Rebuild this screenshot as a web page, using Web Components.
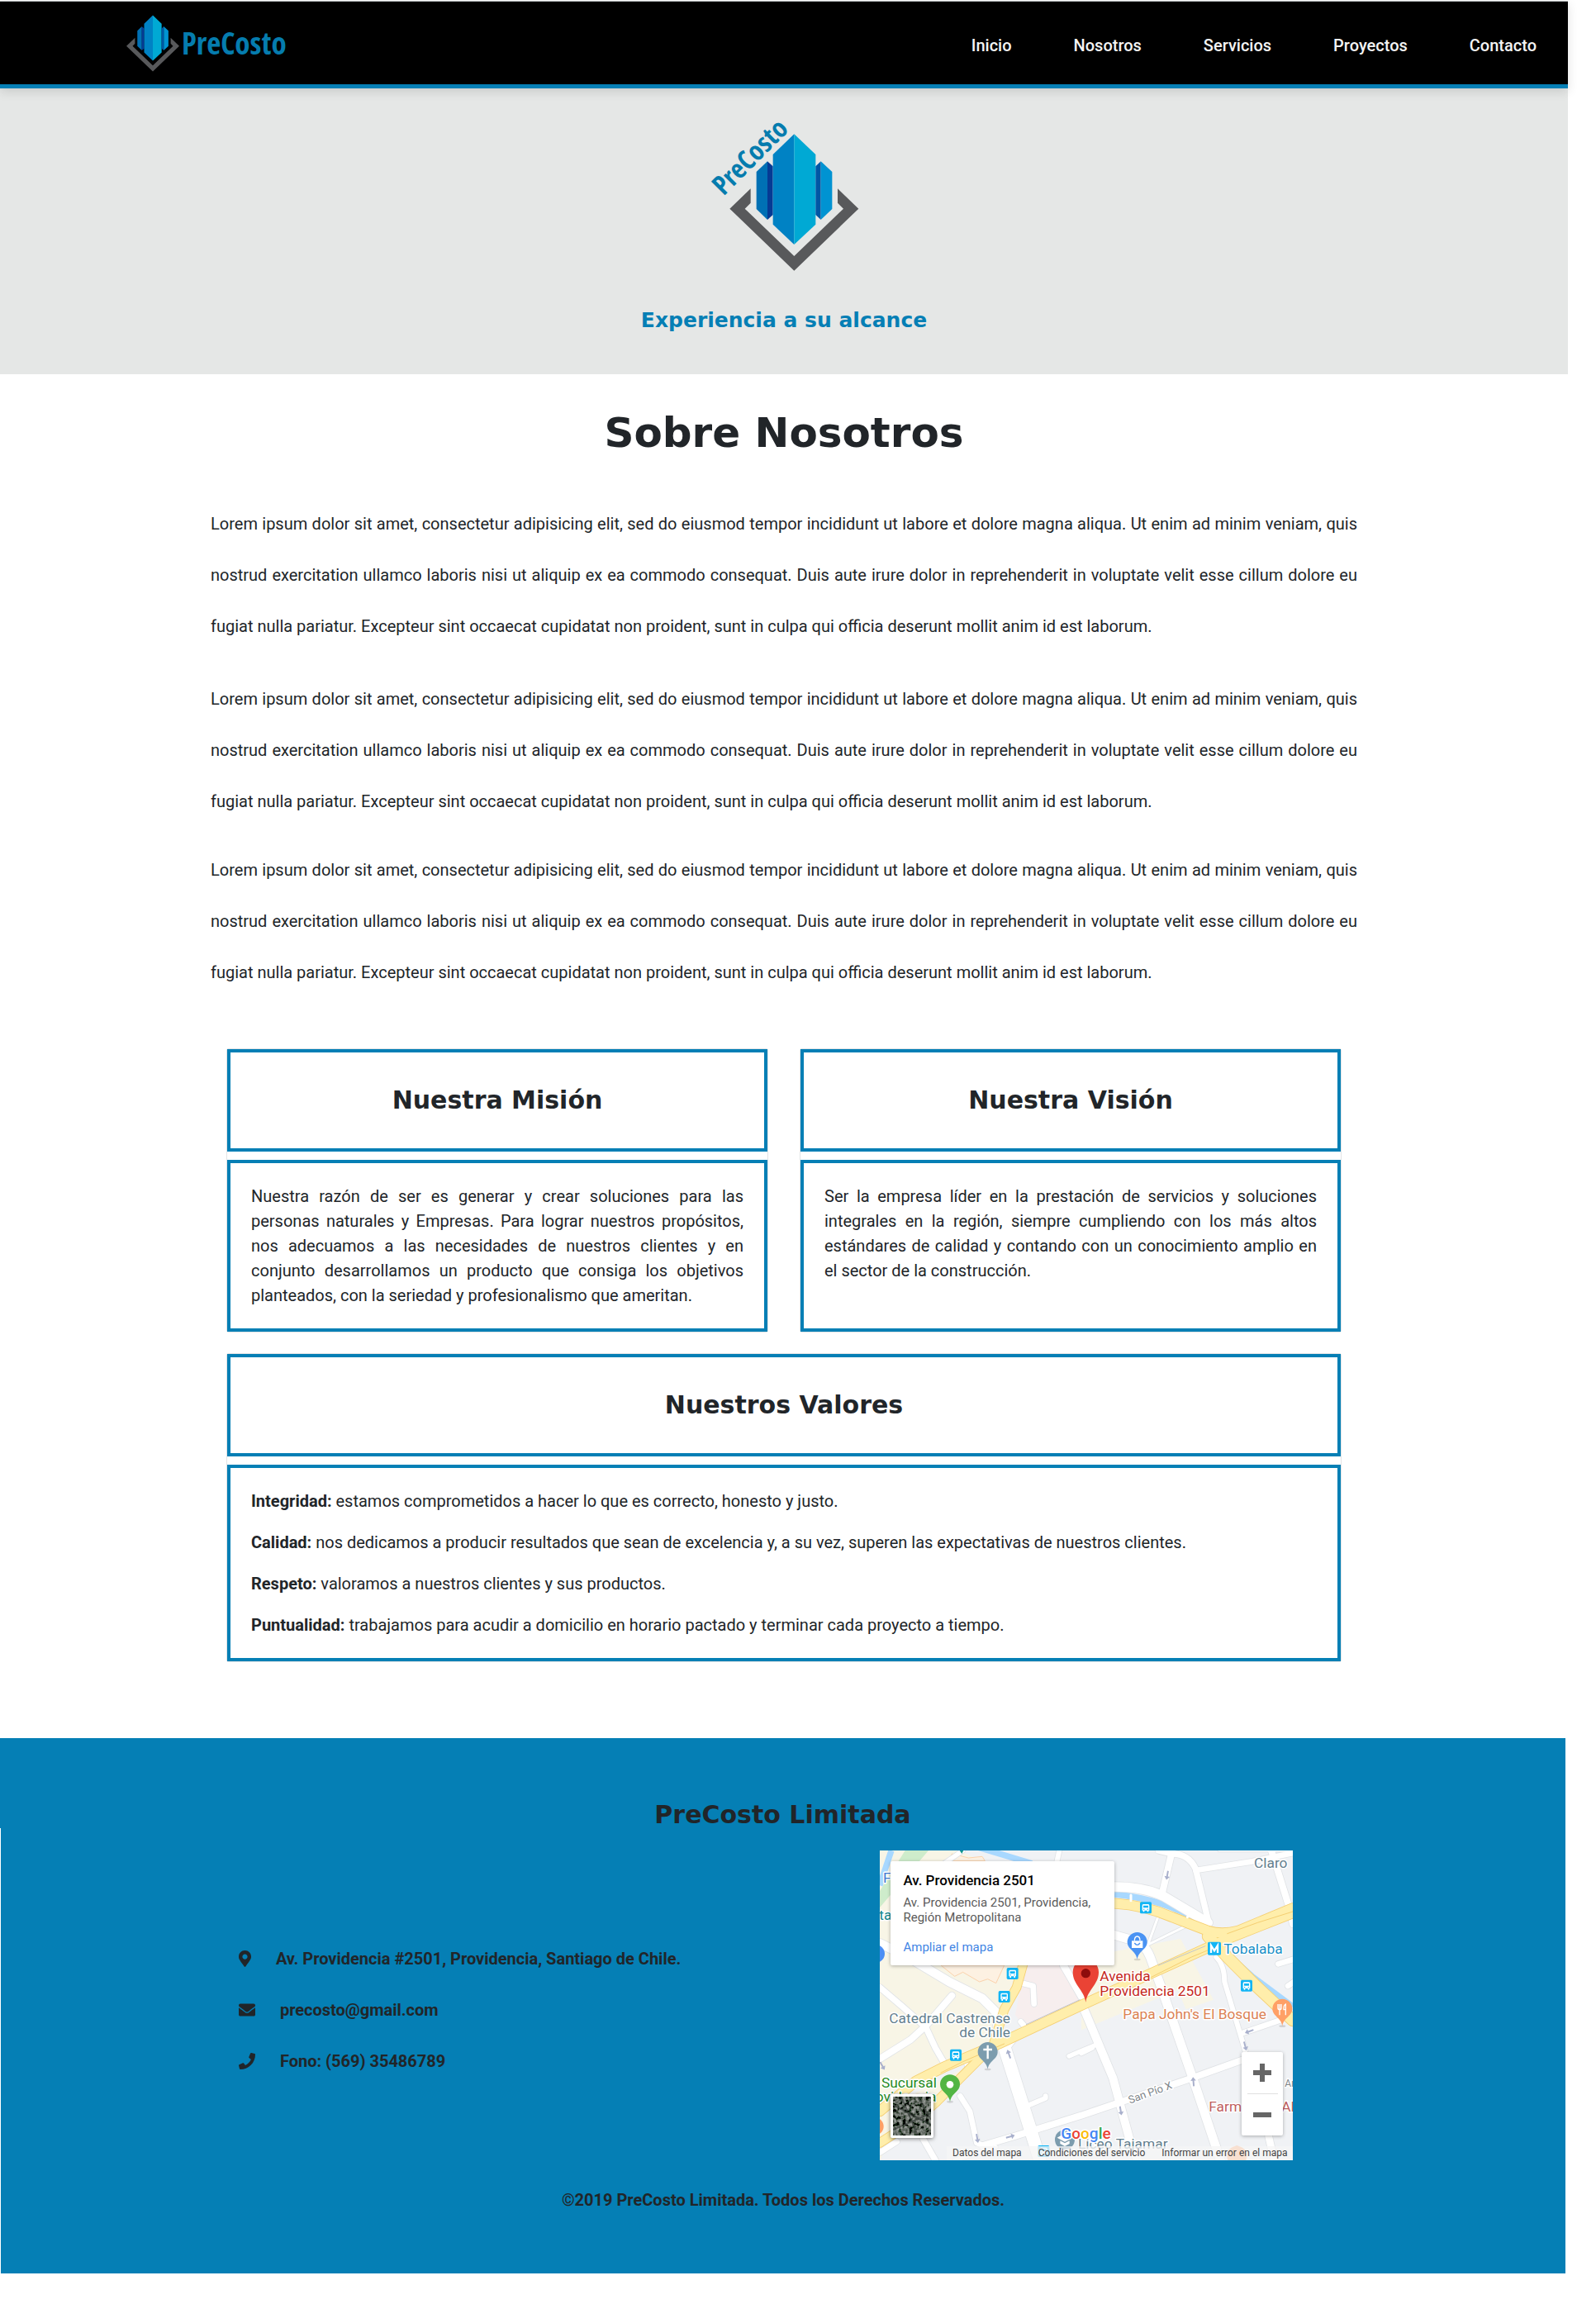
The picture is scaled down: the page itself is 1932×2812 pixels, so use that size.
<!DOCTYPE html>
<html lang="es">
<head>
<meta charset="utf-8">
<title>PreCosto - Sobre Nosotros</title>
<style>
  body {
    margin: 0;
    padding: 1px 34px 59px 0;
    background: #fff;
    color: #212529;
    font: 400 20px/30px Roboto, "Liberation Sans", sans-serif;
    --brand: #057fb5;
    --display: "DejaVu Sans", Verdana, sans-serif;
    --logo: "Liberation Sans Narrow", "Open Sans Condensed", "Liberation Sans", sans-serif;
  }
</style>
</head>
<body>
<about-page></about-page>

<script>
const define = (name, html) => customElements.define(name, class extends HTMLElement {
  constructor() {
    super();
    this.attachShadow({ mode: 'open' }).innerHTML = html;
  }
});

const towers = `
  <path fill="#58595b" d="M564 354V406L543 427 722 599 901 427 880 406V354L956 427 722 652 488 427Z"/>
  <path fill="#0070b4" d="M585 293 625 255V467L585 428Z"/>
  <path fill="#063a94" d="M625 255 645 273V449L625 467Z"/>
  <path fill="#0082c4" d="M645 230 722 156V557L645 484Z"/>
  <path fill="#00a9d4" d="M722 156 800 230V484L722 557Z"/>
  <path fill="#0056a4" d="M800 273 819 255V467L800 449Z"/>
  <path fill="#0093d2" d="M819 255 860 293V428L819 467Z"/>`;

define('site-header', `
<style>
  :host { display: block; position: relative; }
  header {
    display: flex; align-items: center; justify-content: space-between;
    height: 100px; padding-left: 153px;
    background: #000; border-top: 1px solid #b4b8ba; border-bottom: 5px solid var(--brand);
    box-shadow: 0 4px 12px rgba(0,0,0,.12);
  }
  .brand { display: flex; align-items: center; gap: 3px; color: #057cae; text-decoration: none; font: 700 37px/40px var(--logo); }
  nav { display: flex; gap: 75px; padding: 6px 38px 0 0; }
  nav a { color: #f4f4f4; text-decoration: none; font-weight: 500; }
</style>
<header>
  <a class="brand" href="#inicio">
    <svg width="64" height="69" viewBox="488 155 468 498" aria-hidden="true">${towers}</svg>
    <span>PreCosto</span>
  </a>
  <nav>
    <a href="#inicio">Inicio</a><a href="#nosotros">Nosotros</a><a href="#servicios">Servicios</a><a href="#proyectos">Proyectos</a><a href="#contacto">Contacto</a>
  </nav>
</header>`);

define('hero-banner', `
<style>
  :host { display: block; background: #e5e7e6; padding: 40px 0 50px; text-align: center; }
  svg { display: block; margin: 0 auto 44px; overflow: visible; }
  text { font: 700 99px var(--logo); fill: #057cae; }
  p { margin: 0; color: var(--brand); font: 700 25px/30px var(--display); }
</style>
<svg width="182" height="182" viewBox="412 110 546 546" aria-hidden="true">
  ${towers}
  <text transform="translate(466 382) rotate(-45)">PreCosto</text>
</svg>
<p><slot></slot></p>`);

define('about-intro', `
<style>
  :host { display: block; }
  h1 { margin: 0 0 49px; text-align: center; font: 700 50px/60px var(--display); }
  ::slotted(p) { margin: 0 0 21px; line-height: 62px; text-align: justify; }
  ::slotted(p:first-child) { margin-bottom: 26px; }
</style>
<h1>Sobre Nosotros</h1>
<slot></slot>`);

define('info-card', `
<style>
  :host { display: flex; flex-direction: column; gap: 10px; box-shadow: 0 0 0 1px #e2e4e6; border-radius: 2px; }
  .head, .body { border: 4px solid var(--brand); background: #fff; }
  .head { padding: 40px 25px; text-align: center; font: 700 30px/36px var(--display); }
  .body { flex: 1; display: flex; flex-direction: column; gap: 20px; padding: 25px; text-align: justify; }
  ::slotted(h2) { margin: 0; font: inherit; }
  ::slotted(p) { margin: 0; }
</style>
<div class="head"><slot name="title"></slot></div>
<div class="body"><slot></slot></div>`);

define('contact-list', `
<style>
  :host { display: block; padding-top: 11px; font-weight: 700; }
  ul { list-style: none; margin: 0; padding: 0; line-height: 62px; }
  li { display: flex; align-items: center; gap: 30px; }
  svg { height: 20px; fill: #212529; }
  a { color: inherit; text-decoration: none; }
</style>
<ul>
  <li><svg width="15" viewBox="0 0 384 512" aria-hidden="true"><path d="M172.268 501.67C26.97 291.031 0 269.413 0 192 0 85.961 85.961 0 192 0s192 85.961 192 192c0 77.413-26.97 99.031-172.268 309.67-9.535 13.774-29.93 13.773-39.464 0zM192 272c44.183 0 80-35.817 80-80s-35.817-80-80-80-80 35.817-80 80 35.817 80 80 80z"/></svg><span>Av. Providencia #2501, Providencia, Santiago de Chile.</span></li>
  <li><svg width="20" viewBox="0 0 512 512" aria-hidden="true"><path d="M502.3 190.8c3.9-3.1 9.7-.2 9.7 4.7V400c0 26.5-21.5 48-48 48H48c-26.5 0-48-21.5-48-48V195.6c0-5 5.7-7.8 9.7-4.7 22.4 17.4 52.1 39.5 154.1 113.6 21.1 15.4 56.7 47.8 92.2 47.6 35.7.3 72-32.8 92.3-47.6 102-74.1 131.6-96.3 154-113.7zM256 320c23.2.4 56.6-29.2 73.4-41.4 132.7-96.3 142.8-104.7 173.4-128.7 5.8-4.5 9.2-11.5 9.2-18.9v-19c0-26.5-21.5-48-48-48H48c-26.5 0-48 21.5-48 48v19c0 7.4 3.4 14.3 9.2 18.9 30.6 23.9 40.7 32.4 173.4 128.7 16.8 12.2 50.2 41.8 73.4 41.4z"/></svg><a href="mailto:precosto@gmail.com">precosto@gmail.com</a></li>
  <li><svg width="20" viewBox="0 0 512 512" aria-hidden="true"><path d="M493.4 24.6l-104-24c-11.3-2.6-22.9 3.3-27.5 13.9l-48 112c-4.2 9.8-1.4 21.3 6.9 28l60.6 49.6c-36 76.7-98.9 140.5-177.2 177.2l-49.6-60.6c-6.8-8.3-18.2-11.1-28-6.9l-112 48C3.9 366.5-2 378.1.6 389.4l24 104C27.1 504.2 36.7 512 48 512c256.1 0 464-207.5 464-464 0-11.2-7.7-20.9-18.6-23.4z"/></svg><span>Fono: (569) 35486789</span></li>
</ul>`);

const bus = (x, y) => `<g transform="translate(${x} ${y})"><rect width="42" height="42" rx="5" fill="#12b5f5"/><path fill="#fff" d="M12 8H30Q34 8 34 13V31H31V36H26V31H16V36H11V31H8V13Q8 8 12 8Z"/><path fill="#12b5f5" d="M12 13H30V21H12ZM12 25H16V28H12ZM26 25H30V28H26Z"/></g>`;
const pin = (x, y, c, inner) => `<g transform="translate(${x} ${y})"><ellipse cy="0" rx="12" ry="4" fill="#0002"/><path fill="${c}" d="M0 0C-4-32-36-36-36-63A36 36 0 1 1 36-63C36-36 4-32 0 0Z"/>${inner}</g>`;
const arrow = (x, y, r) => `<path transform="translate(${x} ${y}) rotate(${r})" fill="#a9b0cc" d="M-3 16V-4H-10L0-17 10-4H3V16Z"/>`;
const streets = [
  ['M48 400 150 450 300 540 420 600 470 650 480 740', 32], ['M48 560 130 630 215 705 250 780 285 840', 22],
  ['M48 820 160 750 215 700 310 590', 24], ['M545 540 605 555 608 620', 20], ['M715 480 790 610', 26],
  ['M900 195Q1010 195 1080 230L1240 325', 34], ['M1110 63 1072 225', 24], ['M1060 63 1110 75Q1170 75 1195 130L1240 315', 22],
  ['M1195 135 1400 103 1548 72', 20], ['M1470 63 1535 270 1548 330', 24],
  ['M900 370 970 390Q1010 400 1030 450L1070 560 1190 905 1285 1188', 32], ['M790 640 895 890 960 1130 985 1188', 30],
  ['M500 775 590 1060 630 1188', 46], ['M420 1135 540 1100 780 1025 1180 890 1370 822', 24],
  ['M1022 405 1058 305', 9], ['M1022 405 1165 335', 9], ['M1270 450Q1300 480 1300 540L1375 790', 18],
  ['M1360 728 1500 680', 20], ['M1495 475 1560 455', 20], ['M1530 555 1560 535', 20],
  ['M735 810 770 795 830 770', 16], ['M590 988 650 962V955', 18], ['M340 955 375 1010 400 1125 425 1135', 20],
  ['M560 685 590 720', 20], ['M500 800 560 720', 14], ['M360 830 370 860', 16], ['M205 1110 250 1188', 22],
  ['M48 1160 110 1120', 20], ['M1460 1100 1480 1188', 26], ['M470 1140 320 1188', 14],
  ['M780 800 820 780', 16], ['M180 180 350 63', 16], ['M700 63 690 110', 18], ['M1280 63 1548 63', 8]
];
const yellow = [
  ['M48 1010 180 900 280 850 480 765 780 625 1010 520 1230 420 1320 380 1548 290', 34],
  ['M48 1125 180 1040 250 980 370 860 460 770 500 640 545 560 570 470', 30],
  ['M900 255Q1010 262 1110 305L1240 355Q1290 370 1350 355L1548 272', 34],
  ['M1240 375 1310 450 1420 560 1548 680', 40]
];
const strokes = (list, colour, extra) => list.map(([d, w]) => `<path d="${d}" stroke="${colour}" stroke-width="${w + extra}"/>`).join('');

define('location-map', `
<style>
  :host { display: block; position: relative; overflow: hidden; width: 500px; height: 375px; background: #f0f2f5; }
  .map { display: block; width: 100%; height: 100%; }
  .map text { font: 400 52px Roboto, sans-serif; paint-order: stroke; stroke: #fff; stroke-width: 9px; stroke-linejoin: round; }
  .card { position: absolute; left: 13px; top: 13px; box-sizing: border-box; width: 271px; height: 126px; padding: 12px 15px; background: #fff; border-radius: 2px; box-shadow: 0 1px 4px rgba(0,0,0,.3); font-size: 15px; line-height: 18px; color: #5b5b5b; }
  .card strong { display: block; font-size: 17px; line-height: 22px; font-weight: 500; color: #000; margin-bottom: 7px; }
  .card a { display: block; margin-top: 18px; color: #4285e4; text-decoration: none; }
  .thumb { position: absolute; left: 13px; top: 295px; box-sizing: border-box; width: 52px; height: 53px; padding: 0; border: 3px solid #fff; border-radius: 2px; background: #5a5c55; box-shadow: 0 1px 5px rgba(0,0,0,.5); overflow: hidden; }
  .thumb svg { display: block; }
  .zoom { position: absolute; right: 12px; bottom: 30px; display: flex; flex-direction: column; width: 50px; background: #fff; border-radius: 2px; box-shadow: 0 1px 4px rgba(0,0,0,.3); }
  .zoom button { height: 50px; padding: 0; border: 0; background: none; }
  .zoom button svg { display: block; margin: auto; }
  .zoom hr { width: 37px; margin: 0 auto; border: 0; border-top: 1px solid #e0e0e0; }
  .legal { position: absolute; right: 0; bottom: 0; display: flex; gap: 20px; padding: 0 7px; background: rgba(245,245,245,.75); font-size: 12px; line-height: 17px; color: #444; white-space: nowrap; }
  .legal a { color: inherit; text-decoration: none; }
</style>
<svg class="map" viewBox="48 63 1500 1125" role="img" aria-label="Mapa de Av. Providencia 2501">
  <path fill="#f8f5e6" d="M48 63H340L560 180 580 480 480 760 270 850 48 960ZM48 1010 340 860 350 900 100 1090 48 1188Z"/>
  <path fill="#f8f5e6" d="M780 430 900 430 1140 383 1260 605 1160 640 1130 570 780 715Z"/>
  <path fill="#f7eeee" d="M575 480H740L790 610 570 700 540 660Z"/>
  <path fill="#fdf1e2" stroke="#fbd2ac" stroke-width="3" d="M270 480 320 520 350 505 410 540 440 530 470 545 500 480ZM300 101 310 75 370 90 420 85 430 101Z"/>
  <path fill="#ceeccb" d="M140 63H225L48 270V210Z"/>
  <g fill="none" stroke="#a8d8ff" stroke-width="22"><path d="M90 63 48 190M400 50 600 110M900 222Q1080 240 1210 320M1310 440 1400 520 1548 630"/></g>
  <g fill="none" stroke-linecap="round" stroke-linejoin="round">
    ${strokes(streets, '#e0e3e6', 5)}${strokes(streets, '#fff', 0)}
    ${strokes(yellow, '#f5cf72', 5)}${strokes(yellow, '#ffeeab', 0)}
    <path stroke="#f5cf72" stroke-width="3" d="M1030 525 1180 450 1240 425M1310 365 1420 325 1548 285M270 870 350 830 500 765"/>
    <path stroke="#fff" stroke-width="9" d="M960 225V245M1165 305 1175 295"/>
    <path stroke="#c3c6ca" stroke-width="3" d="M580 695 775 605M1060 480 1230 410"/>
  </g>
  ${arrow(1092, 153, 190)}${arrow(517, 803, -20)}${arrow(57, 845, 150)}${arrow(402, 1108, 170)}${arrow(522, 1102, 75)}${arrow(1390, 720, -110)}${arrow(1375, 773, 165)}${arrow(1187, 903, -5)}${arrow(923, 1008, 170)}
  ${bus(509, 489)}${bus(479, 573)}${bus(303, 785)}${bus(993, 250)}${bus(1359, 533)}${bus(622, 1134)}
  <g transform="translate(1239 395)"><rect width="48" height="48" rx="5" fill="#12b5f5"/><path fill="none" stroke="#fff" stroke-width="7" d="M12 40V13L24 32 36 13V40"/></g>
  <circle cx="34" cy="438" r="32" fill="#4c8ff5"/><circle cx="30" cy="1065" r="32" fill="#ffa066"/>
  <path fill="#12968c" d="M338 63H352L346 75Z"/>
  ${pin(440, 858, '#7c9cae', '<path fill="none" stroke="#fff" stroke-width="7" d="M0-88V-38M-16-72H16"/>')}
  ${pin(303, 976, '#52b544', '<circle cy="-63" r="13" fill="#fff"/>')}
  ${pin(983, 459, '#4a93f3', '<path fill="#fff" d="M-20-68H20V-42H-20Z"/><path fill="none" stroke="#fff" stroke-width="4" d="M-10-68Q-10-84 0-84T10-68"/><path fill="none" stroke="#4a93f3" stroke-width="4" d="M-10-60Q0-46 10-60"/>')}
  ${pin(1510, 701, '#ffa066', '<path fill="none" stroke="#fff" stroke-width="4" d="M-16-80V-66Q-16-60-10-60T-4-66V-80M-10-80V-40M12-40V-80Q4-76 5-60H12"/>')}
  <path fill="#ea4335" d="M796 614C790 570 749 550 749 505A47 47 0 0 1 843 505C843 550 802 570 796 614Z"/><circle cx="796" cy="509" r="17" fill="#8e0c0c"/>
  <circle cx="720" cy="1113" r="36" fill="#7c9cae"/><path fill="#fff" d="M720 1090 748 1106 720 1121 692 1106ZM703 1117 720 1126 737 1117V1128L720 1137 703 1128Z"/>
  <circle cx="1345" cy="1172" r="36" fill="#ffa066"/>
  <text x="60" y="181" fill="#3f7ad0">F</text>
  <text x="46" y="316" fill="#12868c">ta</text>
  <text x="82" y="689" fill="#64808e">Catedral Castrense</text>
  <text x="337" y="741" fill="#64808e">de Chile</text>
  <text x="54" y="923" fill="#268a1e">Sucursal</text>
  <text x="253" y="976" text-anchor="end" fill="#268a1e">Providencia</text>
  <text x="1407" y="126" fill="#64808e">Claro</text>
  <text x="1297" y="437" fill="#1a90c8">Tobalaba</text>
  <text x="847" y="537" fill="#c5281c">Avenida</text>
  <text x="847" y="590" fill="#c5281c">Providencia 2501</text>
  <text x="931" y="675" fill="#db8254">Papa John's El Bosque</text>
  <text transform="translate(956 983) rotate(-20)" fill="#80868b" style="font-size:39px">San Pío X</text>
  <text x="1243" y="1011" fill="#bf5f60">Farm</text><text x="1507" y="1011" fill="#bf5f60">Ah</text>
  <text x="1519" y="921" fill="#80868b" style="font-size:36px">An</text>
  <text x="768" y="1147" fill="#64808e">Liceo Tajamar</text>
  <text x="706" y="1109" style="font:500 57px Roboto,sans-serif"><tspan fill="#4285f4">G</tspan><tspan fill="#ea4335">o</tspan><tspan fill="#fbbc05">o</tspan><tspan fill="#4285f4">g</tspan><tspan fill="#34a853">l</tspan><tspan fill="#ea4335">e</tspan></text>
</svg>
<div class="card"><strong>Av. Providencia 2501</strong>Av. Providencia 2501, Providencia,<br>Región Metropolitana<a href="#mapa">Ampliar el mapa</a></div>
<button class="thumb" aria-label="Vista satelital"><svg width="46" height="47"><filter id="grain"><feTurbulence type="fractalNoise" baseFrequency=".25" numOctaves="3" seed="4"/><feColorMatrix values=".8 0 0 0 -.28 .8 0 0 0 -.26 .8 0 0 0 -.28 0 0 0 0 1"/></filter><rect width="46" height="47" filter="url(#grain)"/><path stroke="#2d3330" stroke-opacity=".6" stroke-width="2" d="M0 10 46 34M10 0 30 47M0 40 46 20M30 0 46 28"/></svg></button>
<div class="zoom">
  <button aria-label="Acercar"><svg width="22" height="22"><path fill="#666" d="M8 0H14V8H22V14H14V22H8V14H0V8H8Z"/></svg></button>
  <hr>
  <button aria-label="Alejar"><svg width="22" height="22"><path fill="#666" d="M0 8H22V14H0Z"/></svg></button>
</div>
<div class="legal"><span>Datos del mapa</span><a href="#condiciones">Condiciones del servicio</a><a href="#error">Informar un error en el mapa</a></div>`);

define('site-footer', `
<style>
  :host { display: block; margin-right: 3px; background: var(--brand); }
  h2 { margin: 0; padding: 77px 0 0; text-align: center; font: 700 30px/32px var(--display); }
  .lower { border-left: 1px solid #fff; padding: 27px 0 74px; }
  .row { display: flex; align-items: center; justify-content: space-between; padding: 0 17.4% 0 15.2%; }
  p { margin: 33px 0 0; text-align: center; font-weight: 700; }
</style>
<footer>
  <h2>PreCosto Limitada</h2>
  <div class="lower">
    <div class="row"><contact-list></contact-list><location-map></location-map></div>
    <p>©2019 PreCosto Limitada. Todos los Derechos Reservados.</p>
  </div>
</footer>`);

const lorem = 'Lorem ipsum dolor sit amet, consectetur adipisicing elit, sed do eiusmod tempor incididunt ut labore et dolore magna aliqua. Ut enim ad minim veniam, quis nostrud exercitation ullamco laboris nisi ut aliquip ex ea commodo consequat. Duis aute irure dolor in reprehenderit in voluptate velit esse cillum dolore eu fugiat nulla pariatur. Excepteur sint occaecat cupidatat non proident, sunt in culpa qui officia deserunt mollit anim id est laborum.';

define('about-page', `
<style>
  :host { display: block; }
  main { max-width: 1388px; margin: 0 auto; padding: 41px 0 93px; }
  .cards { display: grid; grid-template-columns: 1fr 1fr; gap: 27px 40px; padding: 41px 20px 0; }
  .wide { grid-column: 1 / -1; }
  strong { font-weight: 700; }
</style>
<site-header></site-header>
<hero-banner>Experiencia a su alcance</hero-banner>
<main>
  <about-intro><p>${lorem}</p><p>${lorem}</p><p>${lorem}</p></about-intro>
  <div class="cards">
    <info-card><h2 slot="title">Nuestra Misión</h2><p>Nuestra razón de ser es generar y crear soluciones para las personas naturales y Empresas. Para lograr nuestros propósitos, nos adecuamos a las necesidades de nuestros clientes y en conjunto desarrollamos un producto que consiga los objetivos planteados, con la seriedad y profesionalismo que ameritan.</p></info-card>
    <info-card><h2 slot="title">Nuestra Visión</h2><p>Ser la empresa líder en la prestación de servicios y soluciones integrales en la región, siempre cumpliendo con los más altos estándares de calidad y contando con un conocimiento amplio en el sector de la construcción.</p></info-card>
    <info-card class="wide"><h2 slot="title">Nuestros Valores</h2>
      <p><strong>Integridad:</strong> estamos comprometidos a hacer lo que es correcto, honesto y justo.</p>
      <p><strong>Calidad:</strong> nos dedicamos a producir resultados que sean de excelencia y, a su vez, superen las expectativas de nuestros clientes.</p>
      <p><strong>Respeto:</strong> valoramos a nuestros clientes y sus productos.</p>
      <p><strong>Puntualidad:</strong> trabajamos para acudir a domicilio en horario pactado y terminar cada proyecto a tiempo.</p>
    </info-card>
  </div>
</main>
<site-footer></site-footer>`);
</script>
</body>
</html>
